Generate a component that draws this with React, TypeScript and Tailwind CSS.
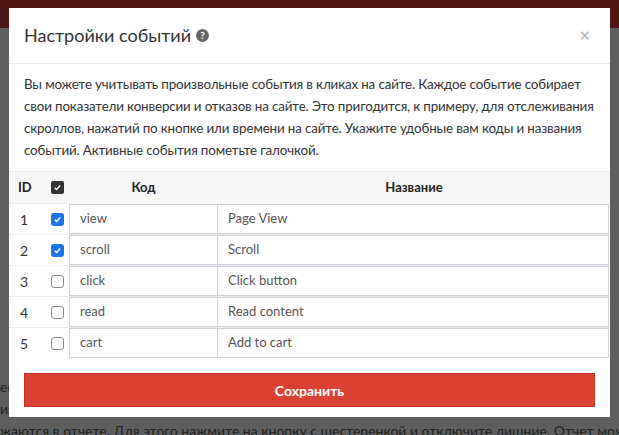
import React from "react";

const rows = [
  { id: 1, on: true, code: "view", name: "Page View" },
  { id: 2, on: true, code: "scroll", name: "Scroll" },
  { id: 3, on: false, code: "click", name: "Click button" },
  { id: 4, on: false, code: "read", name: "Read content" },
  { id: 5, on: false, code: "cart", name: "Add to cart" },
];

function Check({ on }: { on: boolean }) {
  if (on)
    return (
      <span className="flex h-[13px] w-[13px] items-center justify-center rounded-[3px] bg-[#1a73e8]">
        <svg width="9" height="9" viewBox="0 0 10 10">
          <path d="M2 5.2l2 2 4-4.4" fill="none" stroke="white" strokeWidth="1.6" />
        </svg>
      </span>
    );
  return <span className="h-[13px] w-[13px] rounded-[3px] border border-[#8a8a8a] bg-white" />;
}

export default function App() {
  return (
    <div className="relative h-[435px] w-[619px] overflow-hidden bg-[#5e5e5e] text-[#555]" style={{ fontFamily: "Lato, 'Noto Sans', sans-serif" }}>
      <div className="h-[28px] bg-[#4c1612]" />
      <div className="flex flex-col gap-[4px] px-0 pt-[350px] text-[14px] leading-[18px] text-[#222]">
        <div>ес</div>
        <div>ил</div>
        <div className="whitespace-nowrap">жаются в отчете. Для этого нажмите на кнопку с шестеренкой и отключите лишние. Отчет можно скач</div>
      </div>
      <div className="absolute left-[9px] top-[8px] w-[601px] bg-white text-[#333]">
        <div className="flex h-[56px] items-center justify-between border-b border-[#e8e8e8] px-[15px]">
          <div className="flex items-center gap-[5px] text-[18px] text-[#333]">
            Настройки событий
            <span className="flex h-[13px] w-[13px] items-center justify-center rounded-full bg-[#666] text-[10px] font-bold text-white">?</span>
          </div>
          <span className="pr-[5px] text-[18px] font-bold text-[#bbb]">×</span>
        </div>
        <p className="px-[15px] pb-[10px] pt-[9px] text-[13.4px] leading-[22px] tracking-[-0.15px] text-[#333]">
          Вы можете учитывать произвольные события в кликах на сайте. Каждое событие собирает свои показатели конверсии и отказов на сайте. Это пригодится, к примеру, для отслеживания скроллов, нажатий по кнопке или времени на сайте. Укажите удобные вам коды и названия событий. Активные события пометьте галочкой.
        </p>
        <div className="text-[13px]">
          <div className="flex h-[32px] items-center border-t border-[#eee] bg-[#f7f7f7] font-bold text-[#222]">
            <span className="w-[36px] pl-[9px]">ID</span>
            <span className="flex w-[24px] justify-center">
              <span className="flex h-[13px] w-[13px] items-center justify-center rounded-[2px] bg-[#333]">
                <svg width="9" height="9" viewBox="0 0 10 10">
                  <path d="M2 5.2l2 2 4-4.4" fill="none" stroke="white" strokeWidth="1.6" />
                </svg>
              </span>
            </span>
            <span className="w-[149px] text-center">Код</span>
            <span className="flex-1 text-center">Название</span>
          </div>
          {rows.map((r) => (
            <div key={r.id} className="flex h-[31px] items-stretch border-t border-[#eee]">
              <span className="flex w-[36px] items-center pl-[11px] text-[14px] text-[#333]">{r.id}</span>
              <span className="flex w-[24px] items-center justify-center">
                <Check on={r.on} />
              </span>
              <span className="flex w-[149px] items-center border border-[#ccd0d8] bg-white pl-[10px] text-[#555]">{r.code}</span>
              <span className="mr-[1px] flex flex-1 items-center border border-l-0 border-[#ccd0d8] bg-white pl-[10px] text-[#555]">{r.name}</span>
            </div>
          ))}
        </div>
        <div className="px-[15px] pb-[10px] pt-[15px]">
          <button className="h-[34px] w-full border border-[#c9302c] bg-[#db4132] text-[14px] font-bold text-white">Сохранить</button>
        </div>
      </div>
    </div>
  );
}
